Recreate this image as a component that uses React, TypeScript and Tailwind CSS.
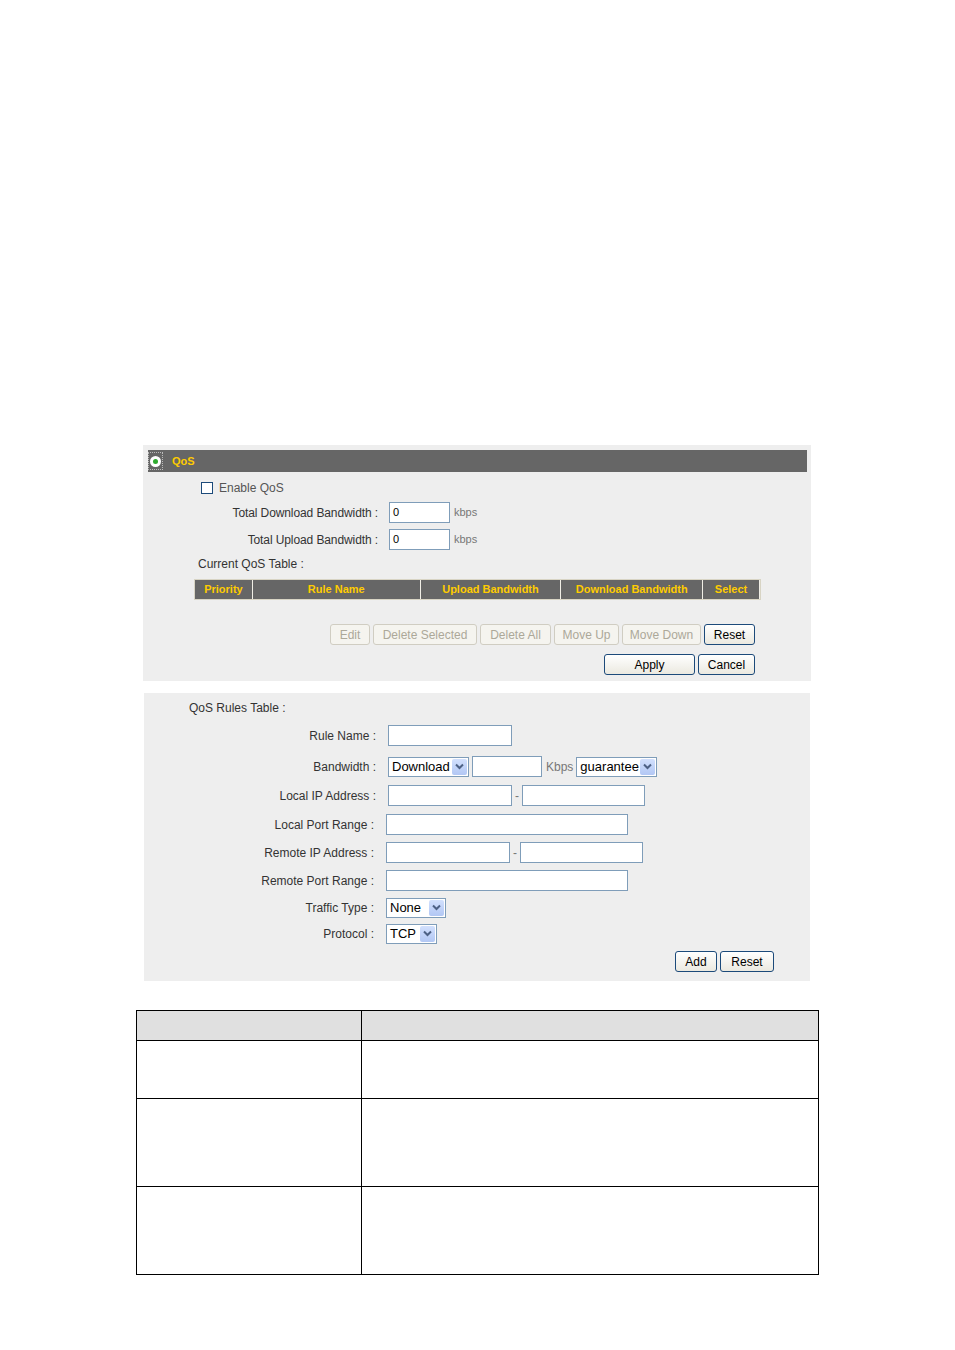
import React from "react";

const font = { fontFamily: '"Liberation Sans", Arial, sans-serif' };

function TextBox({ w }: { w: string }) {
  return <div className={`${w} h-[21px] shrink-0 border border-[#7f9db9] bg-white`} />;
}

function SelectBox({ w, label }: { w: string; label: string }) {
  return (
    <div className={`${w} h-[20px] shrink-0 flex items-center justify-between border border-[#7f9db9] bg-white pl-[3px] pr-[1px]`}>
      <span className="text-[13px] leading-none text-black">{label}</span>
      <span className="flex h-[16px] w-[15px] items-center justify-center rounded-[2px] bg-gradient-to-b from-[#d2e0fd] to-[#b2c7f4]">
        <svg width="9" height="7" viewBox="0 0 9 7">
          <path d="M1 1.5 L4.5 5 L8 1.5" fill="none" stroke="#4d6185" strokeWidth="2" />
        </svg>
      </span>
    </div>
  );
}

function Btn({ w, label, disabled }: { w: string; label: string; disabled?: boolean }) {
  return disabled ? (
    <div className={`${w} h-[21px] flex items-center justify-center rounded-[3px] border border-[#d0cdc2] bg-[#f5f4ef] text-[12px] text-[#aca899]`}>
      {label}
    </div>
  ) : (
    <div className={`${w} h-[21px] flex items-center justify-center rounded-[3px] border border-[#1c4a7a] bg-gradient-to-b from-white to-[#ebe9e0] text-[12px] text-black`}>
      {label}
    </div>
  );
}

function Row({ mt, lw, label, children }: { mt: string; lw: string; label: string; children: React.ReactNode }) {
  return (
    <div className={`${mt} flex h-[21px] items-center`}>
      <div className={`${lw} shrink-0 text-right text-[12px] text-[#333]`}>{label}</div>
      <div className="ml-[12px] flex items-center">{children}</div>
    </div>
  );
}

export default function App() {
  return (
    <div className="relative h-[1350px] w-[955px] bg-white pt-[445px]" style={font}>
      {/* QoS panel */}
      <div className="ml-[143px] h-[236px] w-[668px] bg-[#eeeeee] pl-[5px] pr-[4px] pt-[5px]">
        <div className="flex h-[22px] items-center bg-[#666666]">
          <div className="flex h-[18px] w-[15px] items-center justify-center border border-dotted border-[#bbbbbb]">
            <span className="flex h-[11px] w-[11px] items-center justify-center rounded-full bg-white">
              <span className="h-[5px] w-[5px] rounded-full bg-[#2eaa2e]" />
            </span>
          </div>
          <span className="ml-[9px] text-[11px] font-bold text-[#ffcc00]">QoS</span>
        </div>

        <div className="-ml-[5px]">
          <div className="mt-[6px] flex h-[20px] items-center pl-[58px]">
            <span className="h-[12px] w-[12px] border border-[#1c4a7a] bg-white" />
            <span className="ml-[6px] text-[12px] text-[#555]">Enable QoS</span>
          </div>

          <div className="mt-[4px] flex h-[21px] items-center">
            <div className="w-[235px] text-right text-[12px] tracking-[-0.1px] text-[#333]">Total Download Bandwidth :</div>
            <div className="ml-[11px] flex h-[21px] w-[61px] items-center border border-[#7f9db9] bg-white pl-[3px] text-[11px]">0</div>
            <span className="ml-[4px] text-[11px] text-[#777]">kbps</span>
          </div>

          <div className="mt-[6px] flex h-[21px] items-center">
            <div className="w-[235px] text-right text-[12px] tracking-[-0.1px] text-[#333]">Total Upload Bandwidth :</div>
            <div className="ml-[11px] flex h-[21px] w-[61px] items-center border border-[#7f9db9] bg-white pl-[3px] text-[11px]">0</div>
            <span className="ml-[4px] text-[11px] text-[#777]">kbps</span>
          </div>

          <div className="mt-[6px] flex h-[16px] items-center pl-[55px] text-[12px] text-[#333]">Current QoS Table :</div>

          <div className="ml-[51px] mt-[7px] flex h-[21px] w-[567px] border border-[#d8d4c4] bg-[#d8d4c4]">
            {[
              ["w-[58px]", "Priority"],
              ["w-[168px]", "Rule Name"],
              ["w-[141px]", "Upload Bandwidth"],
              ["w-[142px]", "Download Bandwidth"],
              ["w-[57px]", "Select"],
            ].map(([w, t]) => (
              <div key={t} className={`${w} flex items-center justify-center border-r border-[#f0eee6] bg-[#666666] text-[11px] font-bold text-[#ffcc00]`}>
                {t}
              </div>
            ))}
          </div>

          <div className="mt-[24px] flex justify-end gap-[3px] pr-[52px]">
            <Btn w="w-[40px]" label="Edit" disabled />
            <Btn w="w-[104px]" label="Delete Selected" disabled />
            <Btn w="w-[71px]" label="Delete All" disabled />
            <Btn w="w-[65px]" label="Move Up" disabled />
            <Btn w="w-[79px]" label="Move Down" disabled />
            <Btn w="w-[51px]" label="Reset" />
          </div>

          <div className="mt-[9px] flex justify-end gap-[3px] pr-[52px]">
            <Btn w="w-[91px]" label="Apply" />
            <Btn w="w-[57px]" label="Cancel" />
          </div>
        </div>
      </div>

      {/* QoS rules panel */}
      <div className="ml-[144px] mt-[12px] h-[288px] w-[666px] bg-[#eeeeee] pt-[7px]">
        <div className="flex h-[16px] items-center pl-[45px] text-[12px] text-[#333]">QoS Rules Table :</div>

        <Row mt="mt-[9px]" lw="w-[232px]" label="Rule Name :">
          <TextBox w="w-[124px]" />
        </Row>

        <Row mt="mt-[10px]" lw="w-[232px]" label="Bandwidth :">
          <SelectBox w="w-[81px]" label="Download" />
          <div className="ml-[3px]"><TextBox w="w-[70px]" /></div>
          <span className="ml-[4px] text-[12px] text-[#777]">Kbps</span>
          <div className="ml-[3px]"><SelectBox w="w-[81px]" label="guarantee" /></div>
        </Row>

        <Row mt="mt-[8px]" lw="w-[232px]" label="Local IP Address :">
          <TextBox w="w-[124px]" />
          <span className="mx-[3px] text-[12px] text-[#777]">-</span>
          <TextBox w="w-[123px]" />
        </Row>

        <Row mt="mt-[8px]" lw="w-[230px]" label="Local Port Range :">
          <TextBox w="w-[242px]" />
        </Row>

        <Row mt="mt-[7px]" lw="w-[230px]" label="Remote IP Address :">
          <TextBox w="w-[124px]" />
          <span className="mx-[3px] text-[12px] text-[#777]">-</span>
          <TextBox w="w-[123px]" />
        </Row>

        <Row mt="mt-[7px]" lw="w-[230px]" label="Remote Port Range :">
          <TextBox w="w-[242px]" />
        </Row>

        <Row mt="mt-[6px]" lw="w-[230px]" label="Traffic Type :">
          <SelectBox w="w-[60px]" label="None" />
        </Row>

        <Row mt="mt-[5px]" lw="w-[230px]" label="Protocol :">
          <SelectBox w="w-[51px]" label="TCP" />
        </Row>

        <div className="mt-[7px] flex justify-end gap-[3px] pr-[36px]">
          <Btn w="w-[42px]" label="Add" />
          <Btn w="w-[54px]" label="Reset" />
        </div>
      </div>

      {/* description table */}
      <div className="ml-[136px] mt-[29px] w-[683px] border border-black">
        <div className="flex h-[30px] border-b border-black bg-[#e0e0e0]">
          <div className="w-[225px] border-r border-black" />
          <div className="flex-1" />
        </div>
        <div className="flex h-[58px] border-b border-black">
          <div className="w-[225px] border-r border-black" />
          <div className="flex-1" />
        </div>
        <div className="flex h-[88px] border-b border-black">
          <div className="w-[225px] border-r border-black" />
          <div className="flex-1" />
        </div>
        <div className="flex h-[87px]">
          <div className="w-[225px] border-r border-black" />
          <div className="flex-1" />
        </div>
      </div>
    </div>
  );
}
